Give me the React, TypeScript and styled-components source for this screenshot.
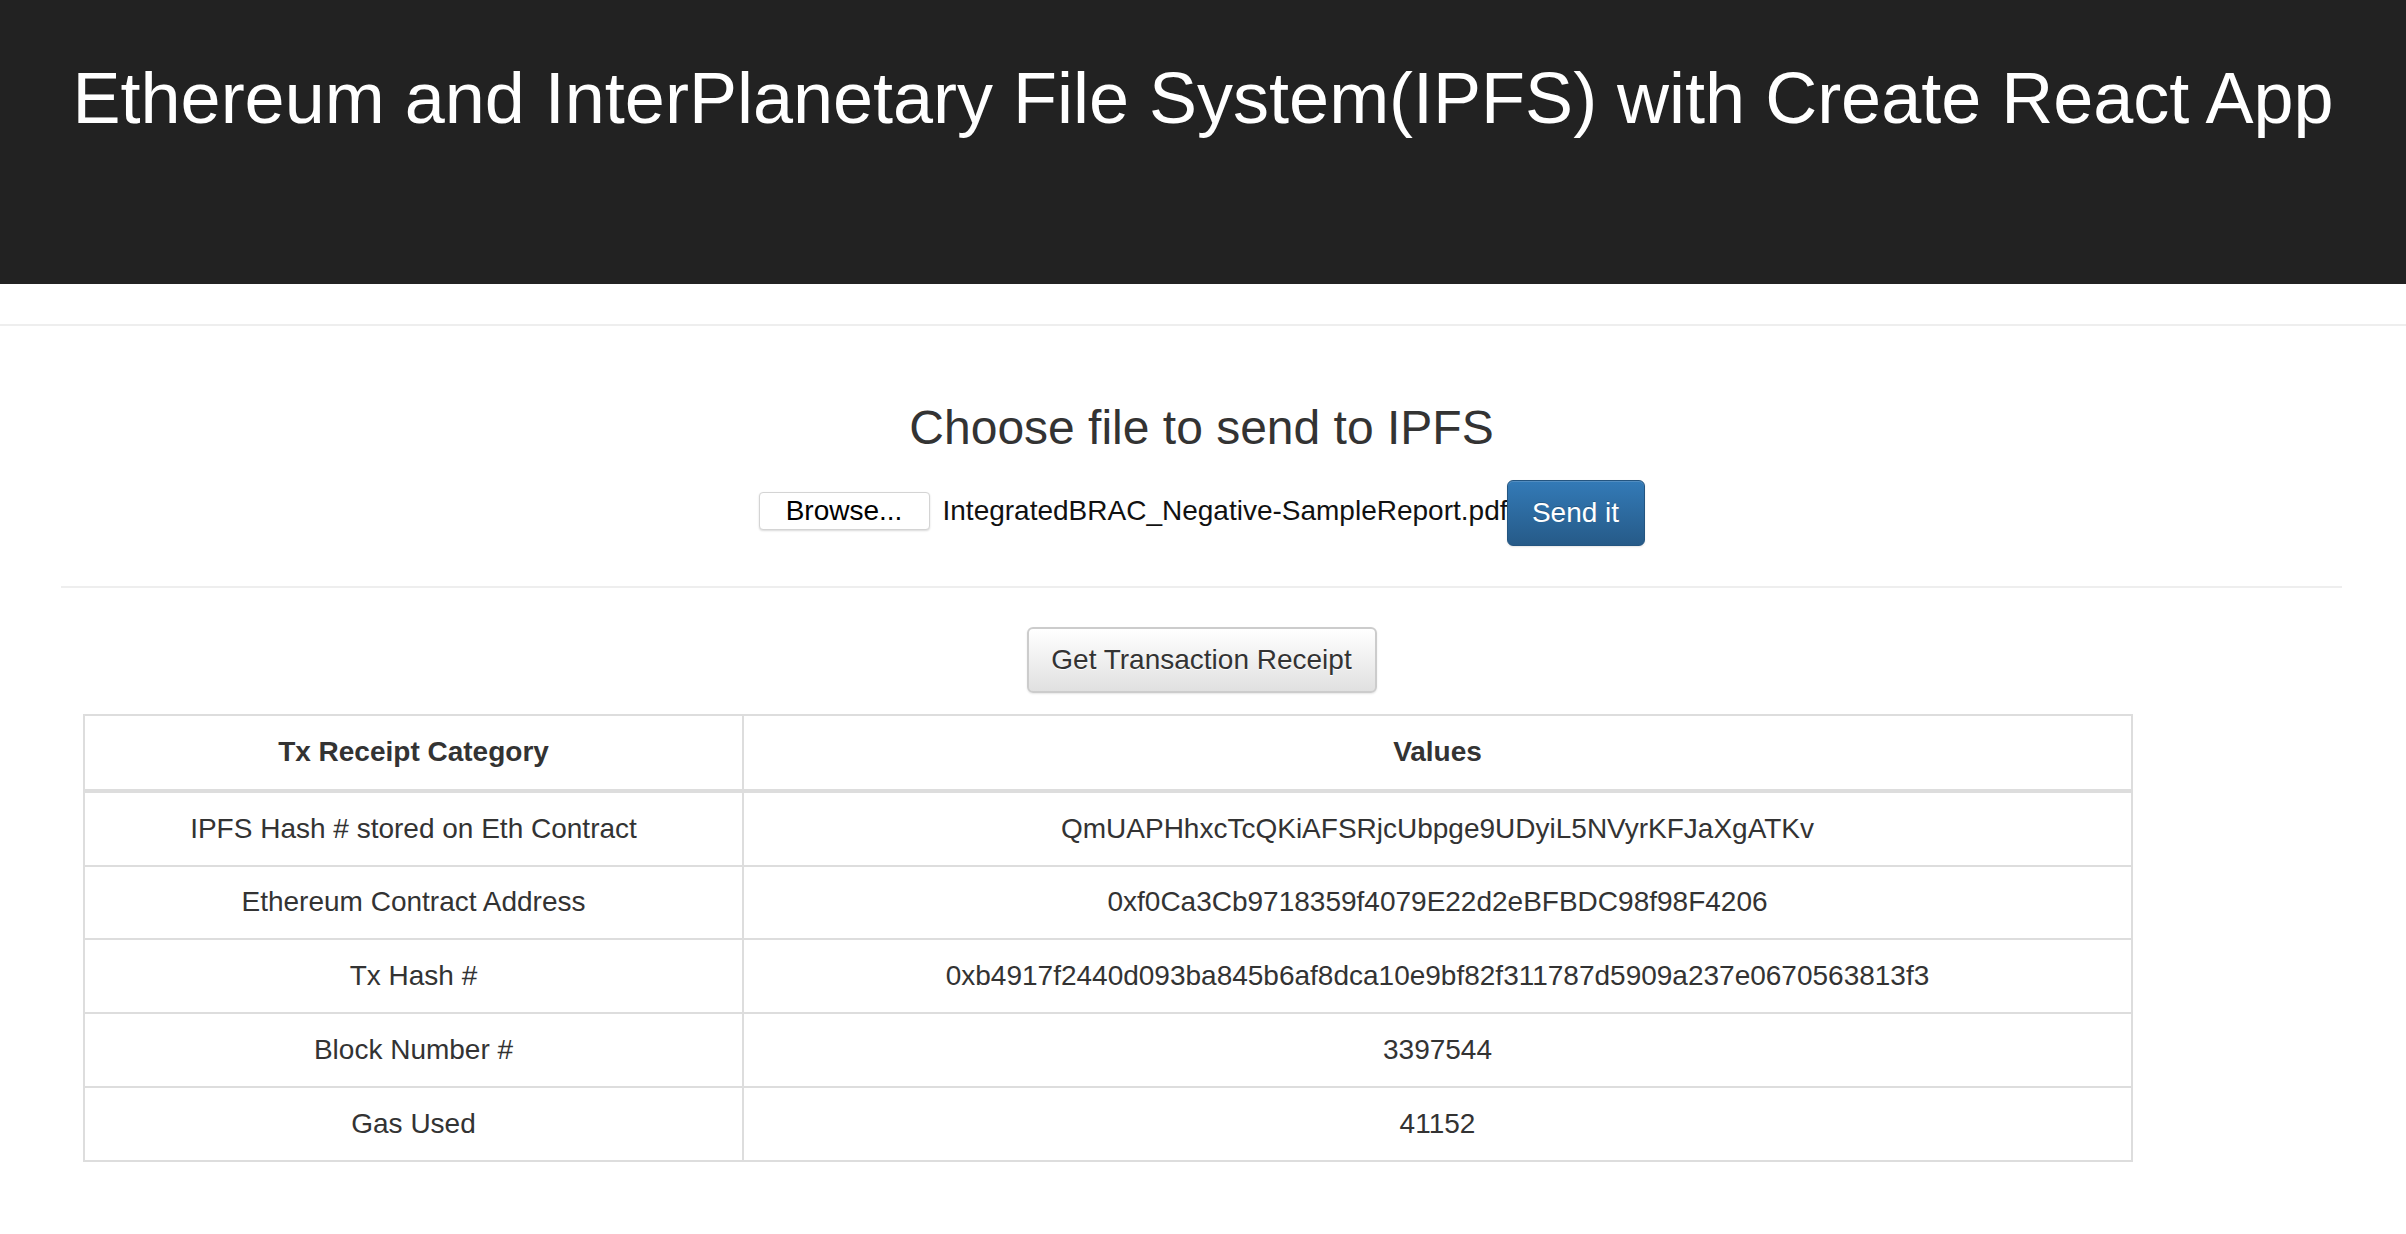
import React from "react";
import styled, { createGlobalStyle } from "styled-components";

const Global = createGlobalStyle`
  html, body { margin: 0; padding: 0; background: #fff; }
  body { font-family: "Liberation Sans", Arial, Helvetica, sans-serif; color: #333; }
`;

const Page = styled.div`
  display: flex;
  flex-direction: column;
  width: 2406px;
`;

const Header = styled.header`
  background: #222;
  height: 284px;
  box-sizing: border-box;
  padding-top: 59px;
  text-align: center;
`;

const Title = styled.h1`
  margin: 0;
  color: #fff;
  font-weight: 400;
  font-size: 72px;
  line-height: 1.1;
`;

const TopRule = styled.div`
  margin-top: 40px;
  height: 2px;
  background: #eee;
`;

const Container = styled.main`
  display: flex;
  flex-direction: column;
  align-items: center;
  padding: 0 64px 0 61px;
`;

const SectionTitle = styled.h3`
  margin: 76px 0 0;
  font-weight: 400;
  font-size: 48px;
  line-height: 1.1;
  color: #333;
`;

const FileRow = styled.form`
  display: flex;
  align-items: center;
  margin-top: 25px;
  height: 66px;
`;

const BrowseButton = styled.button`
  box-sizing: border-box;
  width: 171px;
  height: 38px;
  margin-top: -4px;
  padding: 0;
  background: #fff;
  border: 1px solid #d4d4d4;
  border-radius: 4px;
  box-shadow: 0 1px 2px rgba(0, 0, 0, 0.15);
  font-family: "Liberation Sans", Arial, sans-serif;
  font-size: 28px;
  color: #000;
`;

const FileName = styled.span`
  display: block;
  width: 564px;
  margin-left: 13px;
  margin-top: -4px;
  overflow: hidden;
  white-space: nowrap;
  font-size: 28px;
  color: #111;
`;

const PrimaryButton = styled.button`
  box-sizing: border-box;
  width: 138px;
  height: 66px;
  padding: 0;
  border: 1px solid #245580;
  border-radius: 6px;
  background: linear-gradient(to bottom, #337ab7 0%, #265a88 100%);
  color: #fff;
  font-family: "Liberation Sans", Arial, sans-serif;
  font-size: 28px;
  text-shadow: 0 -1px 0 rgba(0, 0, 0, 0.2);
  box-shadow: inset 0 1px 0 rgba(255, 255, 255, 0.15), 0 1px 2px rgba(0, 0, 0, 0.1);
`;

const Rule = styled.hr`
  align-self: stretch;
  margin: 40px 0 0;
  border: 0;
  height: 2px;
  background: #eee;
`;

const DefaultButton = styled.button`
  box-sizing: border-box;
  margin-top: 39px;
  width: 350px;
  height: 66px;
  padding: 0;
  border: 2px solid #ccc;
  border-radius: 6px;
  background: linear-gradient(to bottom, #fff 0%, #e0e0e0 100%);
  color: #333;
  font-family: "Liberation Sans", Arial, sans-serif;
  font-size: 28px;
  text-shadow: 0 1px 0 #fff;
  box-shadow: inset 0 1px 0 rgba(255, 255, 255, 0.15), 0 1px 2px rgba(0, 0, 0, 0.1);
`;

const Table = styled.table`
  align-self: flex-start;
  margin: 21px 0 0 22px;
  width: 2050px;
  border-collapse: collapse;
  border: 2px solid #ddd;
  font-size: 28px;
  color: #333;
`;

const HeadCell = styled.th<{ $w?: string }>`
  border: 2px solid #ddd;
  border-bottom: 4px solid #ddd;
  padding: 17.5px 12px;
  line-height: 38px;
  font-weight: 700;
  text-align: center;
  width: ${(p) => p.$w || "auto"};
`;

const Cell = styled.td`
  border: 2px solid #ddd;
  padding: 17.9px 12px;
  line-height: 36px;
  text-align: center;
`;

const rows: [string, string][] = [
  ["IPFS Hash # stored on Eth Contract", "QmUAPHhxcTcQKiAFSRjcUbpge9UDyiL5NVyrKFJaXgATKv"],
  ["Ethereum Contract Address", "0xf0Ca3Cb9718359f4079E22d2eBFBDC98f98F4206"],
  ["Tx Hash #", "0xb4917f2440d093ba845b6af8dca10e9bf82f311787d5909a237e0670563813f3"],
  ["Block Number #", "3397544"],
  ["Gas Used", "41152"],
];

export default function App() {
  return (
    <Page>
      <Global />
      <Header>
        <Title>Ethereum and InterPlanetary File System(IPFS) with Create React App</Title>
      </Header>
      <TopRule />
      <Container>
        <SectionTitle>Choose file to send to IPFS</SectionTitle>
        <FileRow onSubmit={(e) => e.preventDefault()}>
          <BrowseButton type="button">Browse...</BrowseButton>
          <FileName>IntegratedBRAC_Negative-SampleReport.pdf</FileName>
          <PrimaryButton type="submit">Send it</PrimaryButton>
        </FileRow>
        <Rule />
        <DefaultButton type="button">Get Transaction Receipt</DefaultButton>
        <Table>
          <thead>
            <tr>
              <HeadCell $w="633px">Tx Receipt Category</HeadCell>
              <HeadCell>Values</HeadCell>
            </tr>
          </thead>
          <tbody>
            {rows.map(([k, v]) => (
              <tr key={k}>
                <Cell>{k}</Cell>
                <Cell>{v}</Cell>
              </tr>
            ))}
          </tbody>
        </Table>
      </Container>
    </Page>
  );
}
